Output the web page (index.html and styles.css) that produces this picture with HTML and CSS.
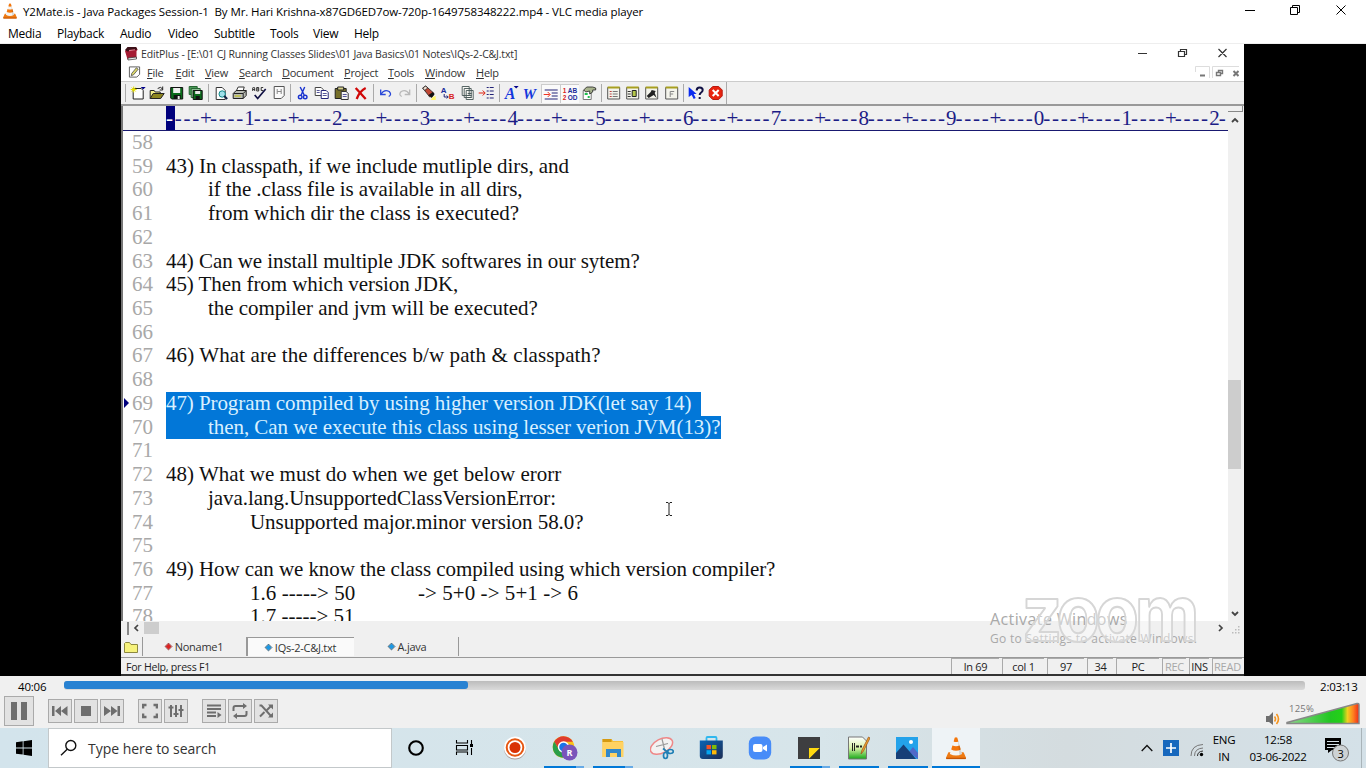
FILE: index.html
```html
<!DOCTYPE html>
<html lang="en">
<head>
<meta charset="utf-8">
<title>VLC media player</title>
<link rel="stylesheet" href="styles.css">
</head>
<body>
<svg width="0" height="0" class="defs">
  <defs>
    <linearGradient id="vol"><stop offset="0" stop-color="#8ed68e"/><stop offset=".6" stop-color="#22c722"/><stop offset=".76" stop-color="#24d018"/><stop offset=".84" stop-color="#f0d020"/><stop offset=".92" stop-color="#ff8020"/><stop offset="1" stop-color="#ee2a18"/></linearGradient>
    <linearGradient id="store" x2="1" y2="1"><stop offset="0" stop-color="#0b64b4"/><stop offset="1" stop-color="#1c2d55"/></linearGradient>
    <linearGradient id="green" x2="0" y2="1"><stop offset="0" stop-color="#fff"/><stop offset=".5" stop-color="#d8f3a8"/><stop offset="1" stop-color="#18a818"/></linearGradient>
    <symbol id="cone" viewBox="0 0 20 22">
      <path d="M2.6 15h14.8l2.3 5q.3 1.600-1 1.600H1.300Q0 21.600.3 20z" fill="#ee7a12"/><path d="M.4 20.200h19.200v1q0 .6-.9.6H1.300q-.9 0-.9-.6z" fill="#c65606"/>
      <path d="M8.600.8q1.400-1 2.800 0l4.600 15.700q-6 3.400-12 0z" fill="#f4f4f2"/>
      <path d="M8.700.8q1.300-1 2.600 0l1 3.500q-2.300 1-4.600 0zM6.500 8.200q3.500 1.500 7 0l1.200 4.100q-4.700 2.300-9.400 0z" fill="#f3760c"/>
      <path d="M11.700 2l4.200 14.600-2.600 1z" fill="#000" opacity=".12"/>
    </symbol>
    <symbol id="doc" viewBox="0 0 16 16"><path d="M2 2.500h12v11.500H2z" fill="#f4f4ec" stroke="#555"/><path d="M2 1.500h12v2H2z" fill="#a8a020"/></symbol>
  </defs>
</svg>

<header class="vlc-title">
  <svg class="vlc-logo"><use href="#cone"/></svg>
  <span class="vlc-name">Y2Mate.is - Java Packages Session-1&nbsp; By Mr. Hari Krishna-x87GD6ED7ow-720p-1649758348222.mp4 - VLC media player</span>
  <svg class="win-buttons" viewBox="0 0 104 16" fill="none" stroke="#000"><path d="M0 8.500h10M45.500 5.500h7v7h-7zM47.500 5.500v-2h7v7h-2M91.500 3.500l9 9M100.500 3.500l-9 9"/></svg>
</header>
<nav class="vlc-menu">
  <span class="m1">Media</span><span class="m2">Playback</span><span class="m3">Audio</span><span class="m4">Video</span><span class="m5">Subtitle</span><span class="m6">Tools</span><span class="m7">View</span><span>Help</span>
</nav>

<main class="video">
<section class="editor">
  <div class="ep-title">
    <svg class="ep-logo" viewBox="0 0 14 14"><path d="M3.500 1.500L12.500 1l1 2.500-1 1V12l-9 1L1 4.500z" fill="#a51c34"/><path d="M1 3.500l2.500-3L12 .5l1.500 2.500L3.500 5z" fill="#3c1018"/><path d="M5 3.500l6-.8v1L5 4.800z" fill="#e67a8c"/><path d="M4 11.500l8.500-1v2L4 13.500z" fill="#eee" stroke="#333" stroke-width=".7"/></svg>
    <span class="ep-name">EditPlus - [E:\01 CJ Running Classes Slides\01 Java Basics\01 Notes\IQs-2-C&amp;J.txt]</span>
    <svg class="ep-buttons" viewBox="0 0 92 14" fill="none" stroke="#333"><path d="M0 6.500h9M40.500 4.500h6v5h-6zM42.500 4.500v-2h6v5h-2M80.500 2l8 8M88.500 2l-8 8" stroke-width="1.200"/></svg>
  </div>
  <div class="ep-menu">
    <svg class="ep-pen" viewBox="0 0 14 14"><path d="M1.500 1.500h11v8l-3 3h-8z" fill="#fff" stroke="#555"/><path d="M3.500 11L4 8.500l5-6 2 1.500-5 6z" fill="#dcd86a" stroke="#444" stroke-width=".8"/></svg>
    <span class="e1"><u>F</u>ile</span><span class="e2"><u>E</u>dit</span><span class="e3"><u>V</u>iew</span><span class="e4"><u>S</u>earch</span><span class="e5"><u>D</u>ocument</span><span class="e6"><u>P</u>roject</span><span class="e7"><u>T</u>ools</span><span class="e8"><u>W</u>indow</span><span class="e9"><u>H</u>elp</span>
    <svg class="mdi" viewBox="0 0 44 14" fill="none" stroke="#777"><path d="M.5 6V.5h14V12M17.500 12V.5H44" stroke="#ddd"/><path d="M5 9.500h5" stroke-width="2"/><path d="M21.500 6.500h4v3h-4zM23.500 6.500v-2h4v3h-2" stroke-width="1.400"/><path d="M38.500 5l5 5M43.500 5l-5 5" stroke-width="2"/></svg>
  </div>
  <div class="toolbar">
    <i class="sep first"></i>
    <svg viewBox="0 0 16 16"><path d="M3.500 3.500h8l2 2v8.500h-10z" fill="#fff" stroke="#222"/><path d="M1 4.500h6M4 1.500v6M2 2.500l4 4M6 2.500l-4 4" stroke="#e8df00"/><path d="M11 2h5l-2.500 2.500z" fill="#008"/></svg>
    <svg viewBox="0 0 16 16"><path d="M1.500 13.500v-8h4l1 1.500h5v2" fill="#f2ef8c" stroke="#222"/><path d="M1.500 13.500l3-5h11l-3.500 5z" fill="#8d8620" stroke="#222"/><path d="M9 3.500q3-2.500 5 .5m0-2.500V5h-3" fill="none" stroke="#222"/></svg>
    <svg viewBox="0 0 16 16"><path d="M2 2.500h12v11.500H3l-1-1z" fill="#0a6a1a" stroke="#111"/><path d="M4.500 3h7v5h-7z" fill="#eee"/><path d="M5 10h7v4H5z" fill="#111"/><path d="M9 11h2v3H9z" fill="#eee"/></svg>
    <svg viewBox="0 0 16 16"><path d="M1.500 1.500h8v8h-8z" fill="#4a9a58" stroke="#276532"/><path d="M3.500 3.500h9v9h-9z" fill="#8cc094" stroke="#276532"/><path d="M5.500 5.500h9v9h-9z" fill="#0a681a" stroke="#111"/><path d="M7.500 6h5v3h-5z" fill="#e6e6e6"/><path d="M8 11h4v3H8z" fill="#111"/></svg>
    <i class="sep"></i>
    <svg viewBox="0 0 16 16"><path d="M3.500 2.500h6l3 3v9h-9z" fill="#fff" stroke="#333"/><circle cx="9.500" cy="9" r="3.200" fill="#9fe0ea" stroke="#188" /><path d="M11.500 11l3 3" stroke="#124" stroke-width="2"/></svg>
    <svg viewBox="0 0 16 16"><path d="M4.500 6l2-4h6l-1 4" fill="#fff" stroke="#333"/><path d="M1.500 8.500l3-3h10v5l-3 3h-10z" fill="#b9bcb4" stroke="#222"/><path d="M2 8.500h9.500l3-3M11.500 8.500v5" fill="none" stroke="#222"/><path d="M3 11h6" stroke="#c4c400"/></svg>
    <svg viewBox="0 0 16 16" fill="none"><path d="M2 6V3l1-1 1 1v3M2 4.500h2M6 6V2.500h2v3.500H6M6 4h2M12.500 2.500H10.500v3h2" stroke="#222" stroke-width=".9"/><path d="M4 10l3 3.500L15 4" stroke="#114" stroke-width="1.700"/></svg>
    <svg viewBox="0 0 16 16"><path d="M3.500 1.500h10v9l-3 3h-7z" fill="#fafafa" stroke="#555"/><path d="M6.500 4v5M10.500 4v5M6.500 6.500h4" stroke="#888"/></svg>
    <i class="sep"></i>
    <svg viewBox="0 0 16 16" fill="none" stroke="#1933cf"><path d="M5.500 2l4 8M10 2l-3.500 8" stroke-width="1.400"/><circle cx="5.500" cy="12" r="1.800" stroke-width="1.400"/><circle cx="10.500" cy="12" r="1.800" stroke-width="1.400"/></svg>
    <svg viewBox="0 0 16 16" fill="#fff" stroke="#444"><path d="M1.500 2.500h6l2 2v6h-8z"/><path d="M7.500 5.500h5l2 2v6h-7z" stroke="#227"/><path d="M3 5.500h3M3 7.500h3M9 8.500h4M9 10.500h4" stroke="#559"/></svg>
    <svg viewBox="0 0 16 16"><path d="M1.500 3.500h11v10h-11z" fill="#77702a" stroke="#222"/><path d="M4 2h6v3H4z" fill="#d7d28b" stroke="#222"/><path d="M7.500 6.500h5l2 2v6h-7z" fill="#f3f3f3" stroke="#333"/><path d="M9 9.500h4M9 11.500h4" stroke="#559"/></svg>
    <svg viewBox="0 0 16 16"><path d="M3 3l10 11M13 3q-6 3-9 11" fill="none" stroke="#d00808" stroke-width="2.300"/></svg>
    <i class="sep"></i>
    <svg viewBox="0 0 16 16" fill="none" stroke="#2947d8" stroke-width="1.300"><path d="M3.500 9q3-5 8-2.500 3 3-.5 5"/><path d="M3 4.500v5h5"/></svg>
    <svg viewBox="0 0 16 16" fill="none" stroke="#b8b8b8" stroke-width="1.300"><path d="M12.500 9q-3-5-8-2.500-3 3 .5 5M13 4.500v5H8"/></svg>
    <i class="sep"></i>
    <svg viewBox="0 0 16 16"><path d="M2 3l3-2 8 7-1 3-3 1z" fill="#c04734" stroke="#222" stroke-width=".8"/><path d="M2 3l3-2 2 2-3 2.500z" fill="#eedfd2" stroke="#222" stroke-width=".8"/><path d="M8 10l3 3 3-4-2-2z" fill="#111"/><path d="M12 12l3-1v4h-5z" fill="#fff76a"/></svg>
    <svg viewBox="0 0 16 16"><text x="0" y="8" class="tiny navy">A</text><text x="8" y="14" class="tiny red">B</text><path d="M3.500 9v3h4M6 10.500L7.500 12 6 13.500" fill="none" stroke="#227"/></svg>
    <svg viewBox="0 0 16 16" fill="#f8f8f4" stroke="#455" stroke-width=".9"><path d="M2.500 1.500h7v9h-7zM4.500 3.500h7v9h-7zM6.500 5.500h7v9h-7z"/><path d="M8 8.500h4M8 10.500h4M8 12.500h4"/></svg>
    <svg viewBox="0 0 16 16" fill="none"><path d="M0 8h6M4 5.500L6.500 8 4 10.500" stroke="#d21"/><path d="M8 2.500h2m1 0h4M8 6h2m1 0h4M8 9.500h2m1 0h4M8 13h2m1 0h4" stroke="#227"/></svg>
    <i class="sep"></i>
    <svg viewBox="0 0 16 16"><text x="1" y="14" class="serif-ico">A</text><path d="M10 1h5l-2.500 2.500z" fill="#008"/></svg>
    <svg viewBox="0 0 16 16"><text x="0" y="14" class="serif-ico w">W</text></svg>
    <svg class="pressed" viewBox="0 0 16 16" fill="none"><path d="M2 4.500h13M9 7.500h6M9 10.500h6M2 13.500h13" stroke="#227"/><path d="M1 9h6M5 6.500L7.500 9 5 11.500" stroke="#e32"/></svg>
    <svg class="pressed" viewBox="0 0 16 16"><text x="1" y="7.500" class="mini red">1</text><text x="6" y="7.500" class="mini navy">AB</text><text x="1" y="14" class="mini red">2</text><text x="6" y="14" class="mini navy">OD</text></svg>
    <svg viewBox="0 0 16 16"><path d="M2.500 5.500h8v9h-8z" fill="#fff" stroke="#777"/><path d="M4 8h3v2H4zM7 11h2v2H7z" fill="#20c050"/><path d="M3 5l3-3h6l3 1v2h-3v2l-3 2V6L5 7z" fill="#a9b48e" stroke="#222" stroke-width=".8"/></svg>
    <i class="sep"></i>
    <svg viewBox="0 0 16 16"><use href="#doc"/><path d="M4 6.500h2M4 9h2M4 11.500h2" stroke="#b44"/><path d="M7 6.500h5M7 9h5M7 11.500h5" stroke="#777"/></svg>
    <svg viewBox="0 0 16 16"><use href="#doc"/><path d="M3 6.500h3M3 9h3M3 11.500h3" stroke="#333"/><path d="M7.500 5.500h4v6h-4z" fill="#b5c84a" stroke="#222"/></svg>
    <svg viewBox="0 0 16 16"><use href="#doc"/><path d="M3 11l4-4 1-2 4 1-1 2 2 5-3-3-5 3z" fill="#222"/></svg>
    <svg viewBox="0 0 16 16"><use href="#doc"/><path d="M6.500 12V6.500h4M6.500 9h3" fill="none" stroke="#888"/></svg>
    <i class="sep"></i>
    <svg viewBox="0 0 16 16"><path d="M1 2l8 7H6l2 4-2 1-2-4-3 2z" fill="#0a2bf0"/><path d="M9 5.500q0-3 3-3t3 2.500q0 1.500-1.500 2.500T12 10M12 12v2" fill="none" stroke="#114" stroke-width="2"/></svg>
    <svg viewBox="0 0 16 16"><path d="M5 1.500h6L14.500 5v6L11 14.500H5L1.500 11V5z" fill="#e8230e" stroke="#b71a10"/><path d="M5 5l6 6M11 5l-6 6" stroke="#fff" stroke-width="2"/></svg>
    <i class="sep last"></i>
  </div>

  <div class="work">
    <div class="pane">
      <div class="ruler"><div class="scale"><em>-</em>---<i>+</i>----<b>1</b>----<i>+</i>----<b>2</b>----<i>+</i>----<b>3</b>----<i>+</i>----<b>4</b>----<i>+</i>----<b>5</b>----<i>+</i>----<b>6</b>----<i>+</i>----<b>7</b>----<i>+</i>----<b>8</b>----<i>+</i>----<b>9</b>----<i>+</i>----<b>0</b>----<i>+</i>----<b>1</b>----<i>+</i>----<b>2</b>-</div></div>
      <div class="page">
<pre class="nums">58
59
60
61
62
63
64
65
66
67
68
69
70
71
72
73
74
75
76
77
78</pre>
<div class="text"></div>
      </div>
    </div>
    <div class="vscroll">
      <i class="split"></i>
      <svg viewBox="0 0 14 12"><path d="M4 8l3-3 3 3" fill="none" stroke="#444" stroke-width="1.800"/></svg>
      <i class="vthumb"></i>
      <svg class="down" viewBox="0 0 14 12"><path d="M4 4l3 3 3-3" fill="none" stroke="#444" stroke-width="1.800"/></svg>
    </div>
  </div>
  <div class="hscroll">
    <i class="hsplit"></i>
    <svg viewBox="0 0 16 14"><path d="M9 4L6 7l3 3" fill="none" stroke="#444" stroke-width="1.700"/></svg>
    <i class="hthumb"></i>
    <svg class="right" viewBox="0 0 16 14"><path d="M7 4l3 3-3 3" fill="none" stroke="#444" stroke-width="1.700"/></svg>
    <svg class="grip" viewBox="0 0 12 12" fill="#bbb"><path d="M8 2h1.500v1.500H8zM5 5h1.500v1.500H5zM8 5h1.500v1.500H8zM2 8h1.500v1.500H2zM5 8h1.500v1.500H5zM8 8h1.500v1.500H8z"/></svg>
  </div>
  <div class="tabs">
    <div class="tab folder"><svg viewBox="0 0 14 12"><path d="M.5 11.500V2.500l1-1h4l1.500 2h6.500v8z" fill="#f6f27c" stroke="#8c8840"/></svg></div>
    <div class="tab t1"><i class="dot red"></i>Noname1</div>
    <div class="tab t2"><i class="dot"></i>IQs-2-C&amp;J.txt</div>
    <div class="tab t3"><i class="dot"></i>A.java</div>
  </div>
  <div class="status">
    <span class="help">For Help, press F1</span>
    <span class="s1">ln 69</span><span class="s2">col 1</span><span class="s3">97</span><span class="s4">34</span><span class="s5">PC</span><span class="s6 off">REC</span><span class="s7">INS</span><span class="s8 off">READ</span>
  </div>
  <svg class="mark" viewBox="0 0 16 10"><path d="M0 0l5 5-5 5z" fill="#00007c"/></svg>
  <svg class="ibeam" viewBox="0 0 8 14" fill="none" stroke="#222"><path d="M1 .5h2l1 1 1-1h2M4 1v12M1 13.500h2l1-1 1 1h2"/></svg>
  <div class="activate"><p class="a1">Activate Windows</p><p class="a2">Go to Settings to activate Windows.</p></div>
  <svg class="zoom" viewBox="0 0 184 56"><text x="3" y="47" transform="translate(0 0) scale(.92 1)" textLength="193">zoom</text></svg>
</section>
</main>

<section class="controls">
  <div class="seek"><span class="elapsed">40:06</span><div class="track"><i class="played"></i></div><span class="total">2:03:13</span></div>
  <div class="buttons">
    <button class="big"><svg viewBox="0 0 16 18" fill="#6e6e6e"><path d="M0 0h6v18H0zM10 0h6v18h-6z"/></svg></button>
    <button class="g1"><svg viewBox="0 0 16 16"><path d="M0 3h2.500v10H0zM3 8l6-5v10zM9 8l6.500-5v10z"/></svg></button>
    <button><svg viewBox="0 0 16 16"><path d="M3 3h10v10H3z"/></svg></button>
    <button><svg viewBox="0 0 16 16"><path d="M13.500 3H16v10h-2.500zM0 3l7 5-7 5zM7 3l6.500 5L7 13z"/></svg></button>
    <button class="g2"><svg viewBox="0 0 16 16" class="ln"><path d="M1 5.500V2h3.500M11.500 2H15v3.500M15 10.500V14h-3.500M4.500 14H1v-3.500" stroke-width="2.600"/></svg></button>
    <button><svg viewBox="0 0 16 16" class="ln"><path d="M3 2v12M8 2v12M13 2v12M.5 4.500h5M5.500 11h5M10.500 7h5"/></svg></button>
    <button class="g3"><svg viewBox="0 0 16 16" class="ln"><path d="M1 2.500h14M1 6h14M1 9.500h9M1 13h9"/><path d="M11.500 9l4 3-4 3z" fill="#6e6e6e" stroke="none"/></svg></button>
    <button><svg viewBox="0 0 16 16" class="ln"><path d="M1.500 8V5q0-2 2-2H13M14.500 8v3q0 2-2 2H3"/><path d="M11 0l4 3-4 3zM5 10l-4 3 4 3z" fill="#6e6e6e" stroke="none"/></svg></button>
    <button><svg viewBox="0 0 16 16" class="ln"><path d="M1.500 2.500h2l9 10h2M2 13.500l4.500-4.500M9 7l4-4"/><path d="M10 1.500h5v5zM15 9.500v5h-5z" fill="#6e6e6e" stroke="none"/></svg></button>
    <div class="volume">
      <svg class="speaker" viewBox="0 0 15 14"><path d="M0 4h3l4-4v13L3 10H0z" fill="#6e6e6e"/><path d="M8.500 4.500q2 2.500 0 5M10.500 2q4 5 0 10" fill="none" stroke="#f6941d" stroke-width="1.600"/></svg>
      <svg class="ramp" viewBox="0 0 76 24"><path d="M2 20.500L72 1.500q2-.5 2 1.500v18.500H2z" fill="url(#vol)" stroke="#888" stroke-width="1.500"/><text x="4" y="10">125%</text></svg>
    </div>
  </div>
</section>

<footer class="taskbar">
  <div class="start"><svg viewBox="0 0 16 16"><path d="M0 2.300L6.700 1.300V7.500H0zM7.500 1.200L16 0v7.500H7.500zM0 8.400h6.700v6.200L0 13.700zM7.500 8.400H16V16l-8.500-1.200z"/></svg></div>
  <div class="search"><svg viewBox="0 0 18 18" fill="none" stroke="#111" stroke-width="1.400"><circle cx="10.800" cy="6.500" r="5"/><path d="M7.200 10.200L1 16.200"/></svg><span>Type here to search</span></div>
  <div class="apps">
    <div class="app"><svg viewBox="1 0 24 24"><circle cx="12" cy="12" r="6.800" fill="none" stroke="#000" stroke-width="2.100"/></svg></div>
    <div class="app"><svg viewBox="2 0 24 24" fill="none" stroke="#000" stroke-width="1.100"><path d="M4.500 4v3h11V4M4.500 19v-3h11v3M4.500 9.500h11v4.500h-11zM19.500 4v4M19.500 12v7"/><path d="M18 8h3v3h-3z" fill="#000" stroke="none"/></svg></div>
    <div class="app"><svg viewBox="0 0 24 24"><circle cx="12" cy="12.500" r="11" fill="#a99c99"/><circle cx="12" cy="11.500" r="11" fill="#fff"/><circle cx="12" cy="11.500" r="8.300" fill="#fff" stroke="#e65712" stroke-width="2"/><circle cx="12" cy="11.500" r="5.500" fill="#d93205"/></svg></div>
    <div class="app run multi"><svg class="chrome" viewBox="0 0 26 26"><circle cx="11.500" cy="12" r="10.800" fill="#fbc116"/><path d="M2.200 6.600A10.800 10.800 0 0 1 20.900 6.800H11.500L7 14.500z" fill="#df3b2e"/><path d="M2.200 6.600A10.800 10.800 0 0 0 11.500 22.800l4.700-8-4.700 2.400L7 14.500z" fill="#2a9e48"/><circle cx="11.500" cy="12" r="5" fill="#1a73e8" stroke="#fff" stroke-width="1.400"/><circle cx="17.500" cy="17.500" r="8" fill="#7a54ba"/><text x="14.500" y="21" class="badge-r">R</text></svg></div>
    <div class="app run multi"><svg viewBox="0 0 24 24"><path d="M1.500 3h9l1.500 2h10v16H1.500z" fill="#f7bf38"/><path d="M1.500 3h9v3h-9z" fill="#d59a12"/><path d="M1.500 6h21v15h-21z" fill="#ffd262"/><path d="M5 21v-8h15v8h-4v-4H9v4z" fill="#3288ca"/></svg></div>
    <div class="app"><svg viewBox="0 0 24 24" fill="none"><ellipse cx="11.500" cy="10" rx="12" ry="7" transform="rotate(-28 11.500 10)" fill="#f3f2f2" stroke="#e88" stroke-width="1.500"/><path d="M12 3l3 12M6 10.500l12-3" stroke="#999" stroke-width="1.200"/><g stroke="#207fb5" stroke-width="1.700"><ellipse cx="15.500" cy="19.500" rx="2" ry="3"/><ellipse cx="20.500" cy="15.500" rx="2.800" ry="2"/><path d="M13 12.500l5 4"/></g></svg></div>
    <div class="app"><svg viewBox="0 0 24 24"><path d="M7.500 5V2q0-1 1-1h8q1 0 1 1v3" fill="none" stroke="#30b8ee" stroke-width="1.800"/><path d="M.8 4.500h23V20q0 3-3 3h-17q-3 0-3-3z" fill="url(#store)"/><path d="M7.500 9H12v4.200H7.500z" fill="#f35325"/><path d="M13 9h4.500v4.200H13z" fill="#81bc06"/><path d="M7.500 14.200H12v4.200H7.500z" fill="#05a6f0"/><path d="M13 14.200h4.500v4.200H13z" fill="#ffba08"/></svg></div>
    <div class="app"><svg viewBox="0 0 24 24"><rect x=".8" y=".5" width="22.400" height="23" rx="7" fill="#478cf8"/><rect x="5" y="8" width="9.500" height="8" rx="2" fill="#fff"/><path d="M15 11l4-2.500v7L15 13z" fill="#fff"/></svg></div>
    <div class="app run multi"><svg viewBox="0 0 24 24"><path d="M1 1h22v22H1z" fill="#3e3e40"/><path d="M12 12h11L12 23z" fill="#ffd90f"/><path d="M12 23L23 12v11z" fill="#333"/></svg></div>
    <div class="app run"><svg viewBox="0 0 24 24"><path d="M2.500 1h14l4 4v18h-18z" fill="url(#green)" stroke="#777"/><path d="M6.500 7v8M8.500 7v8" stroke="#222"/><path d="M10 10.500h3M14 10.500h2" stroke="#222" stroke-width="2"/><path d="M15 18l1-4L22.500 1l1.500 1-6.500 13z" fill="#f5a52c" stroke="#9c5a20" stroke-width=".8"/></svg></div>
    <div class="app run"><svg viewBox="0 0 24 24"><path d="M1 1h22v22H1z" fill="#23a2ea"/><circle cx="16" cy="6" r="2" fill="#fff"/><path d="M14 16l4-5 5 6v6z" fill="#5068c8"/><path d="M1 17L8.500 8.500 21 23H1z" fill="#173f77"/></svg></div>
    <div class="app run active"><svg viewBox="0 0 24 24"><use href="#cone" x="1.500" y="1" width="21" height="22.500"/></svg></div>
  </div>
  <div class="tray">
    <svg class="chev" viewBox="0 0 12 8"><path d="M.7 7L6 1.500 11.300 7" fill="none" stroke="#111" stroke-width="1.300"/></svg>
    <svg class="plus" viewBox="0 0 16 16"><path d="M0 0h16v16H0z" fill="#1768bd"/><path d="M3 8h10M8 3v10" stroke="#fff" stroke-width="1.700"/></svg>
    <svg class="wifi" viewBox="0 0 14 14" fill="none"><path d="M1 13Q1 2 13 1.500M4.500 13q0-7.500 8.500-8" stroke="#777"/><path d="M7.500 13q0-4.500 5.500-5" stroke="#333"/><circle cx="11.500" cy="11.500" r="1.700" fill="#000"/></svg>
    <div class="lang"><span>ENG</span><span>IN</span></div>
    <div class="clock"><span>12:58</span><span>03-06-2022</span></div>
    <svg class="notif" viewBox="0 0 26 26"><path d="M1 2h16v12H8l-4 3v-3H1z" fill="#000"/><path d="M3 5.500h12M3 8.500h12M3 11.500h8" stroke="#d5e0e6"/><circle cx="16.500" cy="17" r="8" fill="#cdd2d4" stroke="#777"/><text x="13.500" y="21.500">3</text></svg>
    <i class="desk"></i>
  </div>
</footer>
<script src="script.js"></script>
</body>
</html>
```

FILE: script.js
```js
// Document lines 58-78 with the tracking of each row; the third field marks the selection.
const lines = [
  ["", 0],
  ["43) In classpath, if we include mutliple dirs, and", -.06],
  ["\tif the .class file is available in all dirs,", -.09],
  ["\tfrom which dir the class is executed?", -.01],
  ["", 0],
  ["44) Can we install multiple JDK softwares in our sytem?", -.07],
  ["45) Then from which version JDK,", -.08],
  ["\tthe compiler and jvm will be executed?", -.04],
  ["", 0],
  ["46) What are the differences b/w path & classpath?", .1],
  ["", 0],
  ["47) Program compiled by using higher version JDK(let say 14)", -.08, true],
  ["\tthen, Can we execute this class using lesser verion JVM(13)?", -.05, true],
  ["", 0],
  ["48) What we must do when we get below erorr", .02],
  ["\tjava.lang.UnsupportedClassVersionError:", -.05],
  ["\t\tUnsupported major.minor version 58.0?", -.05],
  ["", 0],
  ["49) How can we know the class compiled using which version compiler?", -.07],
  ["\t\t1.6 -----> 50\t\t-> 5+0 -> 5+1 -> 6", .06],
  ["\t\t1.7 -----> 51", 0]
];
const text = document.querySelector(".text");
lines.forEach(([line, tracking, selected]) => {
  const row = document.createElement("div");
  const run = document.createElement("span");
  run.textContent = line;
  run.style.letterSpacing = tracking + "px";
  row.className = "row";
  if (selected) run.className = "sel";
  row.append(run);
  text.append(row);
});
```

FILE: styles.css
```css
* { box-sizing: border-box; }
body { margin: 0; width: 1366px; height: 768px; overflow: hidden; display: flex; flex-direction: column; font-family: "Open Sans", "Noto Sans", sans-serif; font-size: 12px; color: #000; background: #fff; }
svg { display: block; flex: none; }
.defs { position: absolute; }
p { margin: 0; }

.vlc-title { height: 22px; display: flex; align-items: center; padding-left: 3px; flex: none; }
.vlc-logo { width: 14px; height: 16px; }
.vlc-name { margin-left: 6px; font-size: 11.5px; letter-spacing: -.1px; white-space: nowrap; }
.win-buttons { width: 104px; height: 16px; margin: 0 17px 2px auto; }
.vlc-menu { height: 22px; display: flex; align-items: center; padding: 2px 0 0 8px; flex: none; letter-spacing: -.25px; border-bottom: 1px solid #eee; }
.m1 { width: 49px; } .m2 { width: 63px; } .m3 { width: 48px; } .m4 { width: 46px; } .m5 { width: 56px; } .m6 { width: 43px; } .m7 { width: 41px; }

.video { height: 632px; flex: none; background: #000; display: flex; padding-left: 121px; }
.editor { position: relative; width: 1123px; height: 632px; background: #f0f0f0; display: flex; flex-direction: column; color: #333; border-bottom: 2px solid #333; font-size: 11px; letter-spacing: -.25px; }
.ep-title { height: 19px; background: #fff; display: flex; align-items: center; padding-left: 3px; flex: none; }
.ep-logo { width: 14px; height: 15px; }
.ep-name { margin-left: 3px; white-space: nowrap; font-size: 10.5px; letter-spacing: -.155px; }
.ep-buttons { width: 92px; height: 14px; margin: 0 14px 0 auto; }
.ep-menu { height: 19px; background: #fff; display: flex; align-items: center; padding-left: 7px; flex: none; border-bottom: 1px solid #ccc; }
.ep-pen { width: 13px; height: 14px; margin-right: 6px; }
.e1 { width: 28.500px; } .e2 { width: 29.500px; } .e3 { width: 34px; } .e4 { width: 43px; } .e5 { width: 62px; } .e6 { width: 44px; } .e7 { width: 37px; } .e8 { width: 51px; }
.mdi { width: 44px; height: 14px; margin: 2px 5px 0 auto; }
.toolbar { height: 24px; display: flex; align-items: center; border-bottom: 2px solid #999; flex: none; }
.toolbar svg { width: 19.380px; height: 16px; overflow: visible; }
.toolbar svg.pressed { background: #fafafa; box-shadow: inset 1px 1px #ccc; height: 19px; padding: 1.500px; }
.sep { height: 18px; border-left: 1px solid #aaa; flex: none; margin-left: 2px; width: 3px; }
.sep.first { margin: 0 0 0 4px; }
.sep.last { height: 22px; margin-left: 1px; }
.tiny { font: bold 8px "Liberation Sans", sans-serif; }
.mini { font: bold 6.500px "Liberation Sans", sans-serif; letter-spacing: 0; }
.navy { fill: #1a2a9a; } .red { fill: #d82222; }
.serif-ico { font: italic bold 16px "Liberation Serif", serif; fill: #1537dc; letter-spacing: 0; }
.serif-ico.w { font-size: 15px; }

.work { height: 515px; display: flex; flex: none; }
.pane { width: 1107px; border-left: 2px solid #777; overflow: hidden; }
.ruler { height: 25px; border-bottom: 1px solid #191970; overflow: hidden; padding-left: 43px; background: #f0f0f0; }
.scale { font: 21px/24px "Liberation Serif", serif; letter-spacing: 1.775px; white-space: nowrap; color: #1c1c86; }
.scale em { font-style: normal; background: #00007c; color: #fff; display: inline-block; height: 24px; }
.scale i { font-style: normal; margin-left: -1px; letter-spacing: -2.070px; }
.scale b { font-weight: normal; margin-left: -.6px; letter-spacing: -1.130px; }
.page { height: 490px; display: flex; background: #fff; overflow: hidden; font: 21px/23.720px "Liberation Serif", serif; letter-spacing: 0; }
pre { margin: 0; font: inherit; }
.nums { width: 43px; padding-left: 9px; color: #a8a8a8; flex: none; }
.text { color: #111; tab-size: 42px; }
.row { height: 23.720px; white-space: pre; }
.sel { display: inline-block; min-width: 535px; background: #0277d8; color: #d9f0ff; height: 23.720px; vertical-align: top; }
.vscroll { width: 16px; background: #f0f0f0; display: flex; flex-direction: column; padding-right: 1px; }
.vscroll svg { width: 14px; height: 12px; }
.split { height: 6px; border: solid #888; border-width: 0 1.500px 1.500px 0; flex: none; margin-bottom: 2px; }
.vthumb { width: 13px; height: 89px; background: #cdcdcd; margin-top: 254px; flex: none; }
.down { margin-top: 139px; }
.hscroll { height: 14px; display: flex; align-items: center; flex: none; }
.hsplit { width: 8px; height: 13px; border-right: 2px solid #888; }
.hscroll svg { width: 16px; height: 14px; }
.hthumb { width: 15px; height: 12px; background: #cdcdcd; margin-left: -1px; }
.hscroll .right { margin-left: auto; }
.hscroll .grip { width: 12px; height: 12px; margin: 3px 2px 0 2px; }
.tabs { height: 23px; display: flex; padding-top: 2px; border-bottom: 1px solid #999; flex: none; }
.tab { height: 19px; display: flex; align-items: center; justify-content: center; border-right: 1px solid #999; }
.folder { width: 22px; padding-right: 2px; } .folder svg { width: 14px; height: 12px; }
.t1 { width: 104px; } .t2 { width: 107px; background: #fafafa; border: solid #999; border-width: 1px 0 0 1px; } .t3 { width: 105px; padding-left: 3px; }
.dot { width: 5px; height: 5px; background: #1b98e4; outline: 1px solid #146; transform: rotate(45deg) scale(.8); margin-right: 4px; }
.dot.red { background: #d22; outline-color: #811; }
.status { height: 16px; display: flex; flex: none; color: #222; }
.status span { text-align: center; line-height: 16px; height: 16px; border: solid #aaa; border-width: 1px 0 0 1px; margin-right: 3px; flex: none; }
.status .help { border: 0; width: 830px; margin: 0; padding: 1px 0 0 5px; text-align: left; font-size: 10.600px; }
.s1 { width: 48px; } .s2 { width: 42px; } .s3 { width: 37px; } .s4 { width: 26px; } .s5 { width: 43px; } .s6 { width: 24px; } .s7 { width: 20px; } .s8 { width: 30px; }
.status .off { color: #a8a8a8; }
.mark { position: absolute; left: 3px; top: 354px; width: 16px; height: 10px; }
.ibeam { position: absolute; left: 544px; top: 458px; width: 8px; height: 14px; }
.activate { position: absolute; left: 869px; top: 564px; color: #a9a9a9; white-space: nowrap; }
.a1 { font-size: 16px; line-height: 22px; letter-spacing: .4px; }
.a2 { font-size: 12px; line-height: 17px; letter-spacing: .3px; }
.zoom { position: absolute; left: 898px; top: 550px; width: 184px; height: 56px; }
.zoom text { font: bold 77px Inter, sans-serif; letter-spacing: 0; fill: rgba(255,255,255,.4); stroke: #d6d6d6; stroke-width: 2; stroke-linejoin: round; }

.controls { height: 52px; background: #f0f0f0; flex: none; }
.seek { height: 20px; display: flex; align-items: center; font-size: 11.500px; letter-spacing: -.2px; }
.elapsed { width: 64px; padding-left: 18px; }
.track { width: 1241px; height: 9px; margin-top: -2px; border-radius: 3px; background: linear-gradient(#bcbcbc, #dadada); }
.played { display: block; width: 404px; height: 8px; border-radius: 3px; background: #2882d2; }
.total { margin-left: 15px; }
.buttons { display: flex; align-items: center; padding-left: 4px; height: 30px; }
button { width: 24px; height: 24px; margin: 0 2px 0 0; padding: 0; background: #e2e2e2; border: 1px solid #aaa; display: flex; align-items: center; justify-content: center; flex: none; }
button svg { width: 16px; height: 16px; fill: #6e6e6e; }
button .ln { fill: none; stroke: #6e6e6e; stroke-width: 2; }
.big { width: 30px; height: 30px; margin-right: 14px; } .big svg { width: 16px; height: 18px; }
.g2, .g3 { margin-left: 12px; }
.volume { margin-left: auto; display: flex; align-items: flex-end; height: 30px; padding-right: 5px; }
.speaker { width: 15px; height: 14px; margin: 0 4px 0 0; }
.ramp { width: 76px; height: 24px; margin-bottom: 0; }
.ramp text { font: 9.500px "Open Sans", sans-serif; fill: #777; letter-spacing: .2px; }

.taskbar { height: 40px; display: flex; flex: none; background: linear-gradient(90deg, #d3e4ec, #d7e5ea 60%, #d4dcdf 78%, #d4e1e8); }
.start { width: 48px; display: flex; align-items: center; justify-content: center; } .start svg { width: 16px; height: 16px; }
.search { width: 344px; background: #fff; border: 1px solid #c3c8ca; display: flex; align-items: center; padding-left: 11px; color: #333; font-size: 14px; }
.search svg { width: 18px; height: 18px; margin-right: 10px; }
.search span { letter-spacing: -.03px; }
.apps { display: flex; }
.app { width: 49.100px; height: 40px; position: relative; display: flex; align-items: center; justify-content: center; }
.app svg { width: 24px; height: 24px; }
.app .chrome { width: 26px; height: 26px; margin-left: 2px; }
.app.run::after { content: ""; position: absolute; left: 5px; right: 4px; bottom: 0; height: 2px; background: #0078d7; }
.app.multi::after { background: linear-gradient(90deg, #0078d7 80%, #66aae6 80%); }
.app.active { background: #eef3f6; width: 48px; } .app.active::after { left: 0; right: 0; }
.badge-r { font: bold 9px "Open Sans", sans-serif; fill: #fff; }
.tray { margin-left: auto; display: flex; align-items: center; height: 40px; }
.chev { width: 12px; height: 8px; margin-right: 10px; } .plus { width: 16px; height: 16px; margin-right: 11px; } .wifi { width: 14px; height: 14px; margin: 4px 0 0; }
.lang, .clock { display: flex; flex-direction: column; align-items: center; font-size: 11.500px; line-height: 17px; letter-spacing: -.3px; white-space: nowrap; }
.lang { width: 40px; } .clock { width: 68px; }
.notif { width: 26px; height: 26px; margin: 2px 11px 0 12px; }
.notif text { font: 11px "Open Sans", sans-serif; }
.desk { width: 5px; height: 40px; border-left: 1px solid #a9b4b9; }
```
